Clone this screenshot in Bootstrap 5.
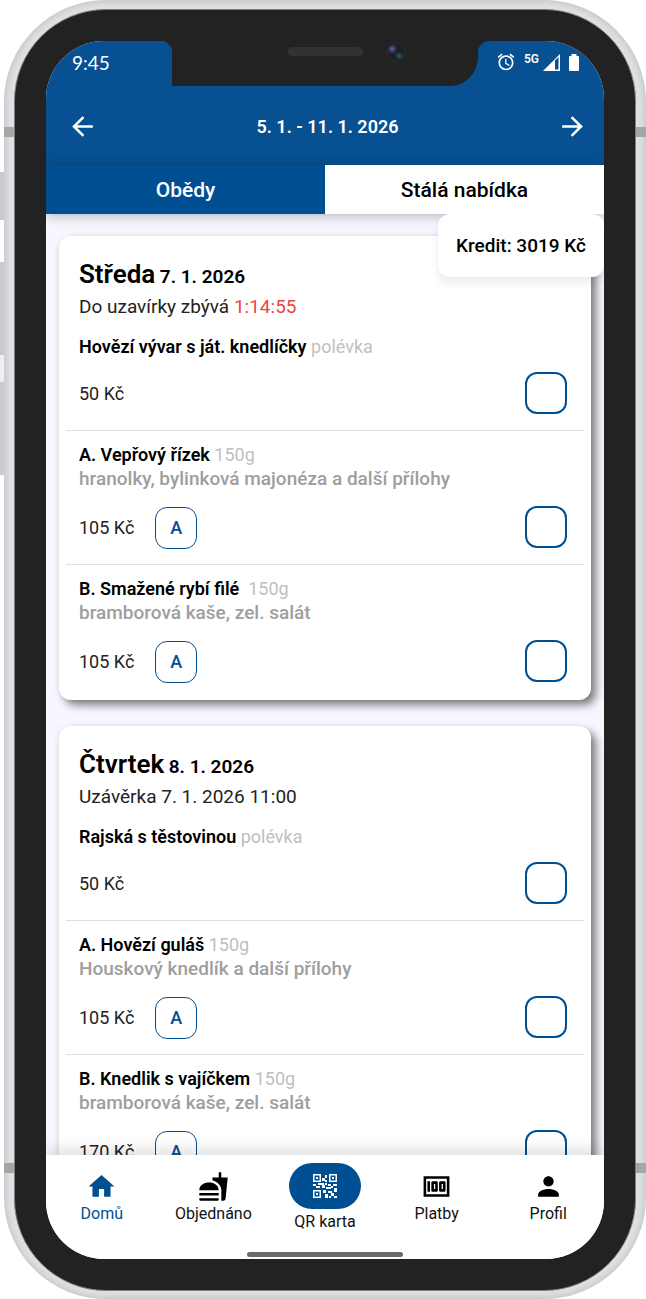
<!DOCTYPE html>
<html lang="cs">
<head>
<meta charset="utf-8">
<meta name="viewport" content="width=device-width, initial-scale=1">
<title>Obědy</title>
<link href="https://cdn.jsdelivr.net/npm/bootstrap@5.3.0/dist/css/bootstrap.min.css" rel="stylesheet">
<style>
:root{--brand:#004f93}
body{font-family:Roboto,"Noto Sans",sans-serif;font-size:18px;line-height:24px;color:#222;background:#fff;overflow:hidden}
.stage{height:100vh;padding-left:4px}
/* handset shell */
.handset{height:100%;padding:9px 10px 8px;border-radius:102px;background:#e1e2e4;box-shadow:inset 0 0 10px #b4b6b8}
.bezel{height:100%;padding:31px;border:1px solid #7b8086;border-radius:92px;background:#222}
.display{height:100%;border-radius:58px;background:#f8f7ff}
.side-key{left:0;width:4px;background:#c9cacc}
.side-gap{left:0;width:4px;background:#eeeef8}
.antenna{left:4px;right:0;height:10px;background:#a5a7a7;z-index:0}
.notch{top:0;left:126px;z-index:3;overflow:visible}
/* header */
.top-area{background:#075092;color:#fff}
.status{height:45px;padding:10px 24px 0 26px}
.clock{font-family:Lato,Roboto,sans-serif;font-size:19px}
.net{font-size:12px;line-height:16px;font-weight:600}
.week{height:79px;padding:2px 16px 0 21px}
.icon-btn{border:0;padding:0;background:none;color:inherit;line-height:0}
.week-title{font-size:18px;font-weight:600}
.tab-btn{height:49px;border:0;padding:0;font-size:21px;font-weight:500;background:#fff;color:#000}
.tab-btn.active{background:var(--brand);color:#fff}
.tabs{box-shadow:0 2px 12px rgba(0,0,0,.28);z-index:1}
.credit{top:100%;right:0;min-width:166px;padding:20px 16px 19px;text-align:center;border-radius:12px;background:#fff;color:#000;font-size:19px;font-weight:500;box-shadow:0 6px 10px rgba(0,0,0,.08)}
/* day cards */
.days{flex:1 1 0;padding:22px 13px 0;min-height:0}
.day{padding:23px 7px 2px;border-radius:12px;background:#fff;margin-bottom:26px;box-shadow:5px 5px 8px rgba(0,0,0,.5),-2px 0 4px rgba(0,0,0,.04)}
.day-head,.meal{padding-left:13px;padding-right:17px}
.day-name{font-size:26px;line-height:30px;font-weight:600;color:#000}
.day-date{font-size:19px;margin-left:-2px}
.deadline{font-size:19px;margin-top:3px;margin-bottom:16px}
.left-time{color:#e8483d}
.meal{padding-top:12px;padding-bottom:16px}
.meal:nth-child(n+3){border-top:1px solid #e0e0e0}
.meal:nth-child(2){padding-top:0}
.meal h3{font-size:18px;line-height:24px;font-weight:600;color:#000;margin:0}
.meal h3 span{font-weight:400;color:#bfbfbf}
.desc{font-size:19px;line-height:23px;font-weight:500;color:#9e9e9e;margin:0}
.order{margin-top:16px;height:42px}
.meal:nth-child(2) .order{margin-top:13px}
.price{padding-top:2px}
.allergen{width:42px;height:42px;margin-left:21px;padding:0;border:1px solid var(--brand);border-radius:12px;background:#fff;color:var(--brand);font-weight:500}
.form-check-input.pick{width:42px;height:42px;margin:0;border:2px solid var(--brand);border-radius:12px;background-color:#fff}
/* bottom bar */
.bottom-bar{height:104px;background:#fff;box-shadow:0 -4px 16px rgba(0,0,0,.15);z-index:2}
.bottom-bar a{flex:1 1 0;font-size:16px;line-height:20px;color:#111;text-decoration:none;padding-top:16px}
.bottom-bar a.active{color:var(--brand)}
.bottom-bar svg{display:block;margin-bottom:2px}
.bottom-bar a.qr{padding-top:8px}
.pill{width:72px;height:46px;margin-bottom:3px;border-radius:23px;background:var(--brand)}
.bottom-bar .pill svg{margin:0}
.home-bar{bottom:2px;width:156px;height:5px;border-radius:3px;background:#6b6b6b}
</style>
</head>
<body>
<div class="stage position-relative">
  <div class="side-key position-absolute" style="top:172px;height:48px"></div>
  <div class="side-key position-absolute" style="top:262px;height:93px"></div>
  <div class="side-gap position-absolute" style="top:355px;height:27px"></div>
  <div class="side-key position-absolute" style="top:382px;height:93px"></div>
  <div class="handset">
    <div class="antenna position-absolute" style="top:127px"></div>
    <div class="antenna position-absolute" style="bottom:126px"></div>
    <div class="bezel position-relative">
      <div class="display d-flex flex-column overflow-hidden position-relative">
        <svg class="notch position-absolute" width="318" height="45" viewBox="0 0 318 45" aria-hidden="true">
          <defs>
            <radialGradient id="lensBlue" cx=".25" cy=".3" r=".45"><stop offset="0" stop-color="#6470b8"/><stop offset="1" stop-color="#1b1d26" stop-opacity="0"/></radialGradient>
            <radialGradient id="lensTeal" cx=".7" cy=".75" r=".4"><stop offset="0" stop-color="#1f6a68"/><stop offset="1" stop-color="#1b1d26" stop-opacity="0"/></radialGradient>
          </defs>
          <path d="M-8 -1V0C-6 0 0 6 0 9V45H277C294 45 306 32 306 15V9C308 4 311 0 318 0V-1Z" fill="#222"/>
          <rect x="116" y="6" width="75" height="9" rx="4" fill="#323232"/>
          <circle cx="224" cy="11" r="10" fill="#282828"/><circle cx="224" cy="11" r="8" fill="#1b1d26"/><circle cx="224" cy="11" r="8" fill="url(#lensBlue)"/><circle cx="224" cy="11" r="8" fill="url(#lensTeal)"/>
        </svg>
        <header class="top-area position-relative flex-shrink-0">
          <div class="status d-flex justify-content-between align-items-start">
            <span class="clock">9:45</span>
            <div class="d-flex align-items-start gap-1">
              <svg width="20" height="22" viewBox="0 0 24 24" fill="currentColor" aria-hidden="true"><path d="M22 5.720l-4.600-3.860-1.290 1.530 4.600 3.860L22 5.720zM7.880 3.390L6.600 1.860 2 5.710l1.290 1.530 4.590-3.850zM12.500 8H11v6l4.750 2.850.75-1.230-4-2.370V8zM12 4c-4.970 0-9 4.030-9 9s4.020 9 9 9c4.970 0 9-4.030 9-9s-4.030-9-9-9zm0 16c-3.870 0-7-3.130-7-7s3.130-7 7-7 7 3.130 7 7-3.130 7-7 7z"/></svg>
              <span class="net ms-1">5G</span>
              <svg width="17" height="20" viewBox="0 0 17 20" fill="currentColor" aria-hidden="true"><path d="M0 20L17 3V20Z"/><path d="M12 9.500L15.500 6V18.500H12Z" fill="#075092"/></svg>
              <svg class="ms-1" width="12" height="20" viewBox="0 0 12 20" fill="currentColor" aria-hidden="true"><path d="M3.500 3H8.500V5H10Q11 5 11 6V19Q11 20 10 20H2Q1 20 1 19V6Q1 5 2 5H3.500Z"/></svg>
            </div>
          </div>
          <div class="week d-flex justify-content-between align-items-center">
            <button class="icon-btn" type="button" aria-label="Předchozí týden"><svg width="31" height="31" viewBox="0 0 24 24" fill="currentColor"><path d="M20 11H7.830l5.590-5.590L12 4l-8 8 8 8 1.410-1.410L7.830 13H20v-2z"/></svg></button>
            <span class="week-title">5. 1. - 11. 1. 2026</span>
            <button class="icon-btn" type="button" aria-label="Další týden"><svg width="31" height="31" viewBox="0 0 24 24" fill="currentColor"><path d="M12 4l-1.410 1.410L16.170 11H4v2h12.170l-5.580 5.590L12 20l8-8z"/></svg></button>
          </div>
          <div class="tabs d-flex position-relative">
            <button class="tab-btn active flex-fill w-50" type="button">Obědy</button>
            <button class="tab-btn flex-fill w-50" type="button">Stálá nabídka</button>
            <div class="credit position-absolute">Kredit: 3019 Kč</div>
          </div>
        </header>
        <main class="days overflow-hidden">
          <section class="day">
            <div class="day-head">
              <h2 class="day-name m-0">Středa <span class="day-date">7. 1. 2026</span></h2>
              <p class="deadline">Do uzavírky zbývá <span class="left-time">1:14:55</span></p>
            </div>
            <div class="meal">
              <h3>Hovězí vývar s ját. knedlíčky <span>polévka</span></h3>
              <div class="order d-flex align-items-center"><div class="price d-flex align-items-center">50 Kč</div><input class="form-check-input pick ms-auto" type="checkbox" aria-label="Hovězí vývar"></div>
            </div>
            <div class="meal">
              <h3>A. Vepřový řízek <span>150g</span></h3>
              <p class="desc">hranolky, bylinková majonéza a další přílohy</p>
              <div class="order d-flex align-items-center"><div class="price d-flex align-items-center">105 Kč<button class="allergen" type="button">A</button></div><input class="form-check-input pick ms-auto" type="checkbox" aria-label="Vepřový řízek"></div>
            </div>
            <div class="meal">
              <h3>B. Smažené rybí filé &nbsp;<span>150g</span></h3>
              <p class="desc">bramborová kaše, zel. salát</p>
              <div class="order d-flex align-items-center"><div class="price d-flex align-items-center">105 Kč<button class="allergen" type="button">A</button></div><input class="form-check-input pick ms-auto" type="checkbox" aria-label="Smažené rybí filé"></div>
            </div>
          </section>
          <section class="day">
            <div class="day-head">
              <h2 class="day-name m-0">Čtvrtek <span class="day-date">8. 1. 2026</span></h2>
              <p class="deadline">Uzávěrka 7. 1. 2026 11:00</p>
            </div>
            <div class="meal">
              <h3>Rajská s těstovinou <span>polévka</span></h3>
              <div class="order d-flex align-items-center"><div class="price d-flex align-items-center">50 Kč</div><input class="form-check-input pick ms-auto" type="checkbox" aria-label="Rajská s těstovinou"></div>
            </div>
            <div class="meal">
              <h3>A. Hovězí guláš <span>150g</span></h3>
              <p class="desc">Houskový knedlík a další přílohy</p>
              <div class="order d-flex align-items-center"><div class="price d-flex align-items-center">105 Kč<button class="allergen" type="button">A</button></div><input class="form-check-input pick ms-auto" type="checkbox" aria-label="Hovězí guláš"></div>
            </div>
            <div class="meal">
              <h3>B. Knedlik s vajíčkem <span>150g</span></h3>
              <p class="desc">bramborová kaše, zel. salát</p>
              <div class="order d-flex align-items-center"><div class="price d-flex align-items-center">170 Kč<button class="allergen" type="button">A</button></div><input class="form-check-input pick ms-auto" type="checkbox" aria-label="Knedlik s vajíčkem"></div>
            </div>
          </section>
        </main>
        <nav class="bottom-bar d-flex justify-content-center position-relative flex-shrink-0">
          <a href="#" class="active d-flex flex-column align-items-center"><svg width="31" height="31" viewBox="0 0 24 24" fill="currentColor"><path d="M10 20v-6h4v6h5v-8h3L12 3 2 12h3v8z"/></svg>Domů</a>
          <a href="#" class="d-flex flex-column align-items-center"><svg width="31" height="31" viewBox="0 0 24 24" fill="#000"><path d="M18.060 22.990h1.660c.84 0 1.530-.64 1.630-1.460L23 5.050h-5V1h-1.970v4.050h-4.970l.3 2.340c1.710.47 3.310 1.320 4.270 2.260 1.440 1.420 2.430 2.890 2.430 5.290v8.050zM1 21.990V21h15.030v.99c0 .55-.45 1-1.010 1H2.010c-.56 0-1.010-.45-1.010-1zm15.030-7c0-8-15.030-8-15.030 0h15.030zM1.020 17h15v2h-15z"/></svg>Objednáno</a>
          <a href="#" class="qr d-flex flex-column align-items-center"><span class="pill d-flex align-items-center justify-content-center"><svg width="24" height="24" viewBox="0 0 24 24" fill="#fff"><path fill-rule="evenodd" d="M0 0h8v8H0zM1.500 1.500v5h5v-5zM16 0h8v8h-8zM17.500 1.500v5h5v-5zM0 16h8v8H0zM1.500 17.500v5h5v-5zM3 3h2v2H3zM19 3h2v2h-2zM3 19h2v2H3z"/><path d="M12 1h2v3h-2zM9 4h3v3H9zM12 6h2v2h-2zM0 10h3v2H0zM5 9h6v2H5zM3 12h4v2H3zM9 11h3v3H9zM12 9h2v2h-2zM15 10h3v2h-3zM20 10h4v2h-4zM18 12h2v2h-2zM13 13h5v2h-5zM21 14h3v4h-3zM10 16h3v3h-3zM15 17h4v2h-4zM18 19h3v3h-3zM12 20h3v4h-3zM16 22h2v2h-2zM21 22h3v2h-3z"/></svg></span>QR karta</a>
          <a href="#" class="d-flex flex-column align-items-center"><svg width="31" height="31" viewBox="0 0 24 24" fill="#000"><path fill-rule="evenodd" d="M5 8h2v8H5zm7 0H9c-.55 0-1 .45-1 1v6c0 .55.45 1 1 1h3c.55 0 1-.45 1-1V9c0-.55-.45-1-1-1zm-1 6h-1v-4h1v4zm7-6h-3c-.55 0-1 .45-1 1v6c0 .55.45 1 1 1h3c.55 0 1-.45 1-1V9c0-.55-.45-1-1-1zm-1 6h-1v-4h1v4zM2 4v16h20V4H2zm2 14V6h16v12H4z"/></svg>Platby</a>
          <a href="#" class="d-flex flex-column align-items-center"><svg width="31" height="31" viewBox="0 0 24 24" fill="#000"><path d="M12 12c2.210 0 4-1.790 4-4s-1.790-4-4-4-4 1.790-4 4 1.790 4 4 4zm0 2c-2.670 0-8 1.340-8 4v2h16v-2c0-2.660-5.330-4-8-4z"/></svg>Profil</a>
          <div class="home-bar position-absolute"></div>
        </nav>
      </div>
    </div>
  </div>
</div>
<script src="https://cdn.jsdelivr.net/npm/bootstrap@5.3.0/dist/js/bootstrap.bundle.min.js"></script>
</body>
</html>
